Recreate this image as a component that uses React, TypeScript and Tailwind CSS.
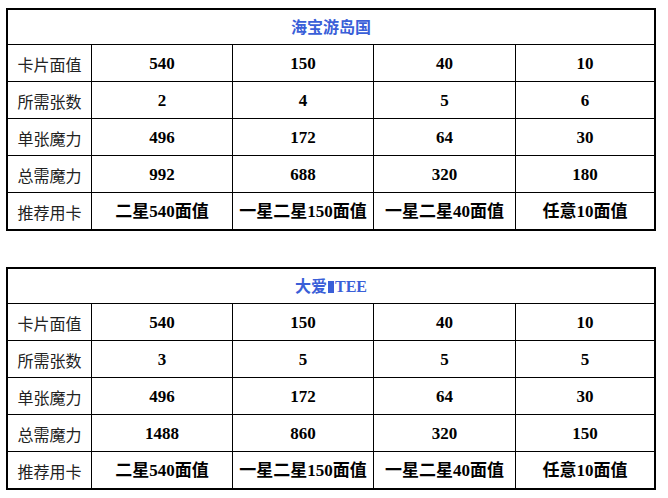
import React from "react";

type Table = {
  title: React.ReactNode;
  rows: { label: string; values: string[] }[];
};

const blueSq = (
  <span className="inline-block w-[6px] h-[12px] bg-[#3a5fd8] mx-[1px] align-[-1px]" />
);

const tables: Table[] = [
  {
    title: "海宝游岛国",
    rows: [
      { label: "卡片面值", values: ["540", "150", "40", "10"] },
      { label: "所需张数", values: ["2", "4", "5", "6"] },
      { label: "单张魔力", values: ["496", "172", "64", "30"] },
      { label: "总需魔力", values: ["992", "688", "320", "180"] },
      { label: "推荐用卡", values: ["二星540面值", "一星二星150面值", "一星二星40面值", "任意10面值"] },
    ],
  },
  {
    title: (
      <>
        大爱{blueSq}TEE
      </>
    ),
    rows: [
      { label: "卡片面值", values: ["540", "150", "40", "10"] },
      { label: "所需张数", values: ["3", "5", "5", "5"] },
      { label: "单张魔力", values: ["496", "172", "64", "30"] },
      { label: "总需魔力", values: ["1488", "860", "320", "150"] },
      { label: "推荐用卡", values: ["二星540面值", "一星二星150面值", "一星二星40面值", "任意10面值"] },
    ],
  },
];

function DataTable({ t }: { t: Table }) {
  return (
    <div className="w-[650px] border-2 border-black bg-white">
      <div
        className="h-[35px] pt-[2px] border-b border-black flex items-center justify-center text-[16px] font-bold text-[#3a5fd8]"
        style={{ fontFamily: '"Liberation Serif", "Noto Sans CJK SC", serif' }}
      >
        {t.title}
      </div>
      {t.rows.map((r, i) => (
        <div
          key={i}
          className={
            "grid grid-cols-[84px_141px_141px_142px_138px] " +
            (i < t.rows.length - 1 ? "h-[37px] border-b border-black" : "h-[36px]")
          }
        >
          <div
            className="border-r border-black pt-[2px] flex items-center justify-center text-[16px] text-[#222]"
            style={{ fontFamily: '"Noto Sans CJK SC", sans-serif' }}
          >
            {r.label}
          </div>
          {r.values.map((v, j) => (
            <div
              key={j}
              className={
                "flex items-center justify-center pt-[2px] text-[17px] font-bold text-black " +
                (j < 3 ? "border-r border-black" : "")
              }
              style={{ fontFamily: '"Liberation Serif", "Noto Sans CJK SC", serif' }}
            >
              {v}
            </div>
          ))}
        </div>
      ))}
    </div>
  );
}

export default function App() {
  return (
    <div className="w-[668px] h-[498px] bg-white pt-[8px] pl-[6px] flex flex-col gap-[36px]">
      {tables.map((t, i) => (
        <DataTable key={i} t={t} />
      ))}
    </div>
  );
}
